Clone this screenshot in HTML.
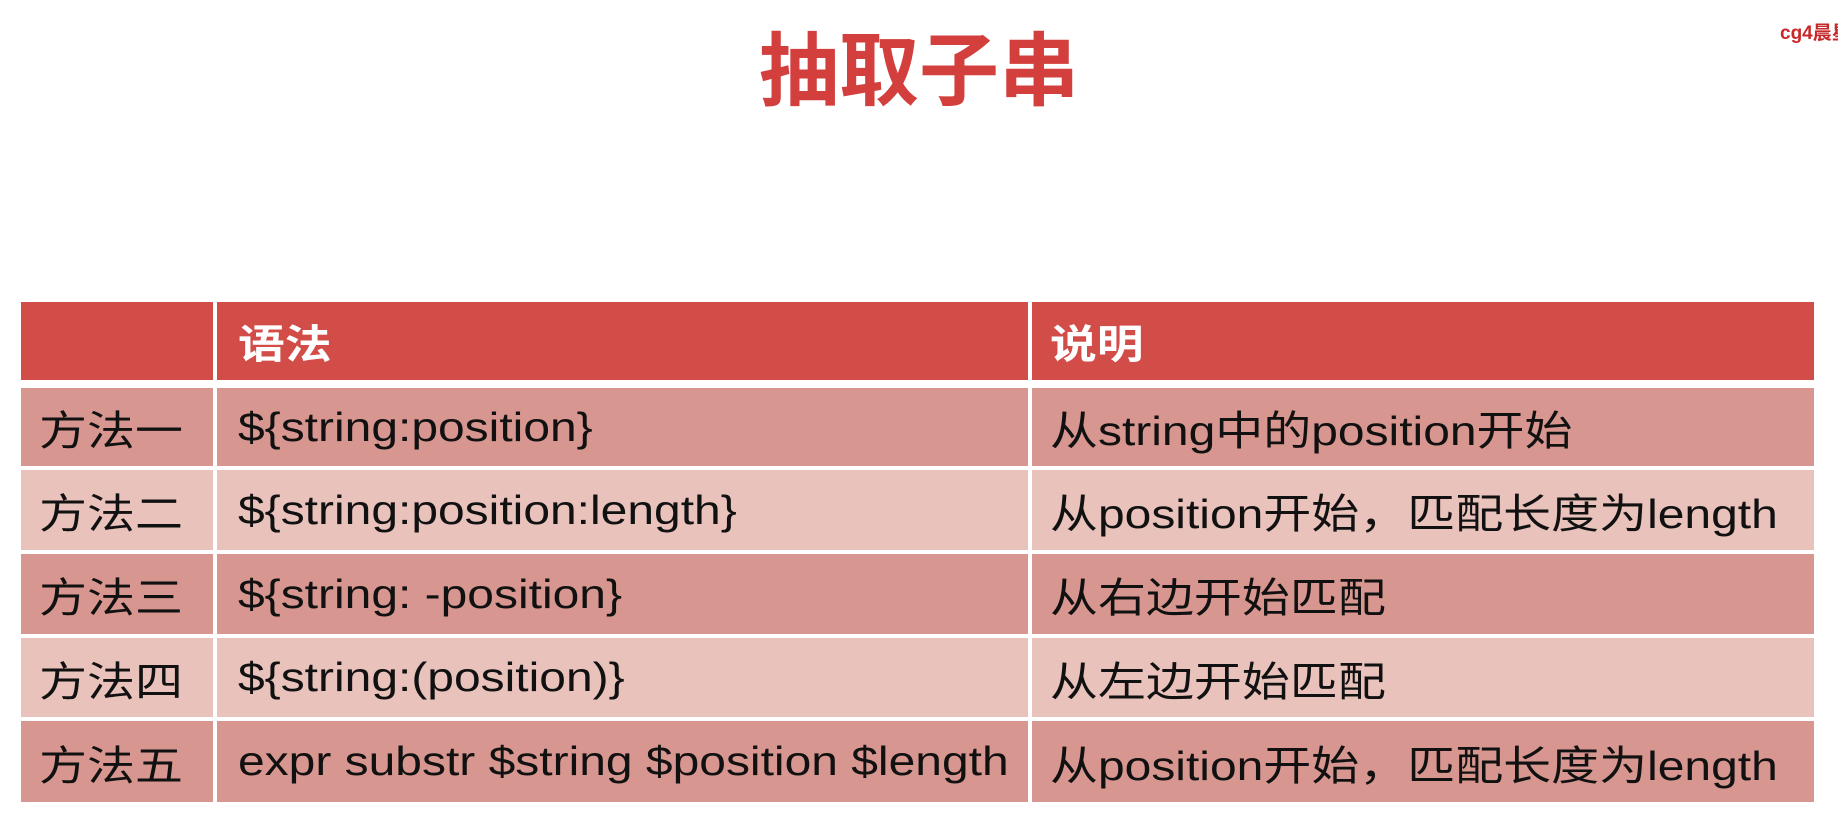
<!DOCTYPE html>
<html><head><meta charset="utf-8"><style>
html,body{margin:0;padding:0;background:#fff;width:1838px;height:830px;overflow:hidden;position:relative;font-family:"Liberation Sans","Noto Sans CJK SC",sans-serif}
.title{position:absolute;left:0;width:1838px;top:24px;text-align:center;font-size:80px;font-weight:bold;color:#d23f3d;line-height:96px}
.wm{position:absolute;right:0;top:18px;font-size:19px;font-weight:bold;color:#c8282a;width:58px;overflow:hidden;white-space:nowrap}
.cell{position:absolute;box-sizing:border-box;display:flex;align-items:center;font-size:41px;color:#111;white-space:nowrap}
.cell span{display:inline-block;transform:scaleX(1.17);transform-origin:left center}
.h{background:#d24c48;color:#fff;font-weight:bold;font-size:40px}
.a{background:#d7968f}
.b{background:#e9c2bc}
</style></head><body>
<div class="title">抽取子串</div>
<div class="wm">cg4晨星</div>

<div class="cell h" style="left:21px;top:302px;width:192px;height:78px"></div>
<div class="cell h" style="left:217px;top:302px;width:811px;height:78px;padding-left:21px"><span>语法</span></div>
<div class="cell h" style="left:1032px;top:302px;width:782px;height:78px;padding-left:18px"><span>说明</span></div>

<div class="cell a" style="left:21px;top:388px;width:192px;height:78px;padding-left:18px"><span>方法一</span></div>
<div class="cell a" style="left:217px;top:388px;width:811px;height:78px;padding-left:21px"><span>${string:position}</span></div>
<div class="cell a" style="left:1032px;top:388px;width:782px;height:78px;padding-left:18px"><span>从string中的position开始</span></div>

<div class="cell b" style="left:21px;top:470px;width:192px;height:80px;padding-left:18px"><span>方法二</span></div>
<div class="cell b" style="left:217px;top:470px;width:811px;height:80px;padding-left:21px"><span>${string:position:length}</span></div>
<div class="cell b" style="left:1032px;top:470px;width:782px;height:80px;padding-left:18px"><span>从position开始，匹配长度为length</span></div>

<div class="cell a" style="left:21px;top:554px;width:192px;height:80px;padding-left:18px"><span>方法三</span></div>
<div class="cell a" style="left:217px;top:554px;width:811px;height:80px;padding-left:21px"><span>${string: -position}</span></div>
<div class="cell a" style="left:1032px;top:554px;width:782px;height:80px;padding-left:18px"><span>从右边开始匹配</span></div>

<div class="cell b" style="left:21px;top:638px;width:192px;height:79px;padding-left:18px"><span>方法四</span></div>
<div class="cell b" style="left:217px;top:638px;width:811px;height:79px;padding-left:21px"><span>${string:(position)}</span></div>
<div class="cell b" style="left:1032px;top:638px;width:782px;height:79px;padding-left:18px"><span>从左边开始匹配</span></div>

<div class="cell a" style="left:21px;top:721px;width:192px;height:81px;padding-left:18px"><span>方法五</span></div>
<div class="cell a" style="left:217px;top:721px;width:811px;height:81px;padding-left:21px"><span>expr substr $string $position $length</span></div>
<div class="cell a" style="left:1032px;top:721px;width:782px;height:81px;padding-left:18px"><span>从position开始，匹配长度为length</span></div>
</body></html>
